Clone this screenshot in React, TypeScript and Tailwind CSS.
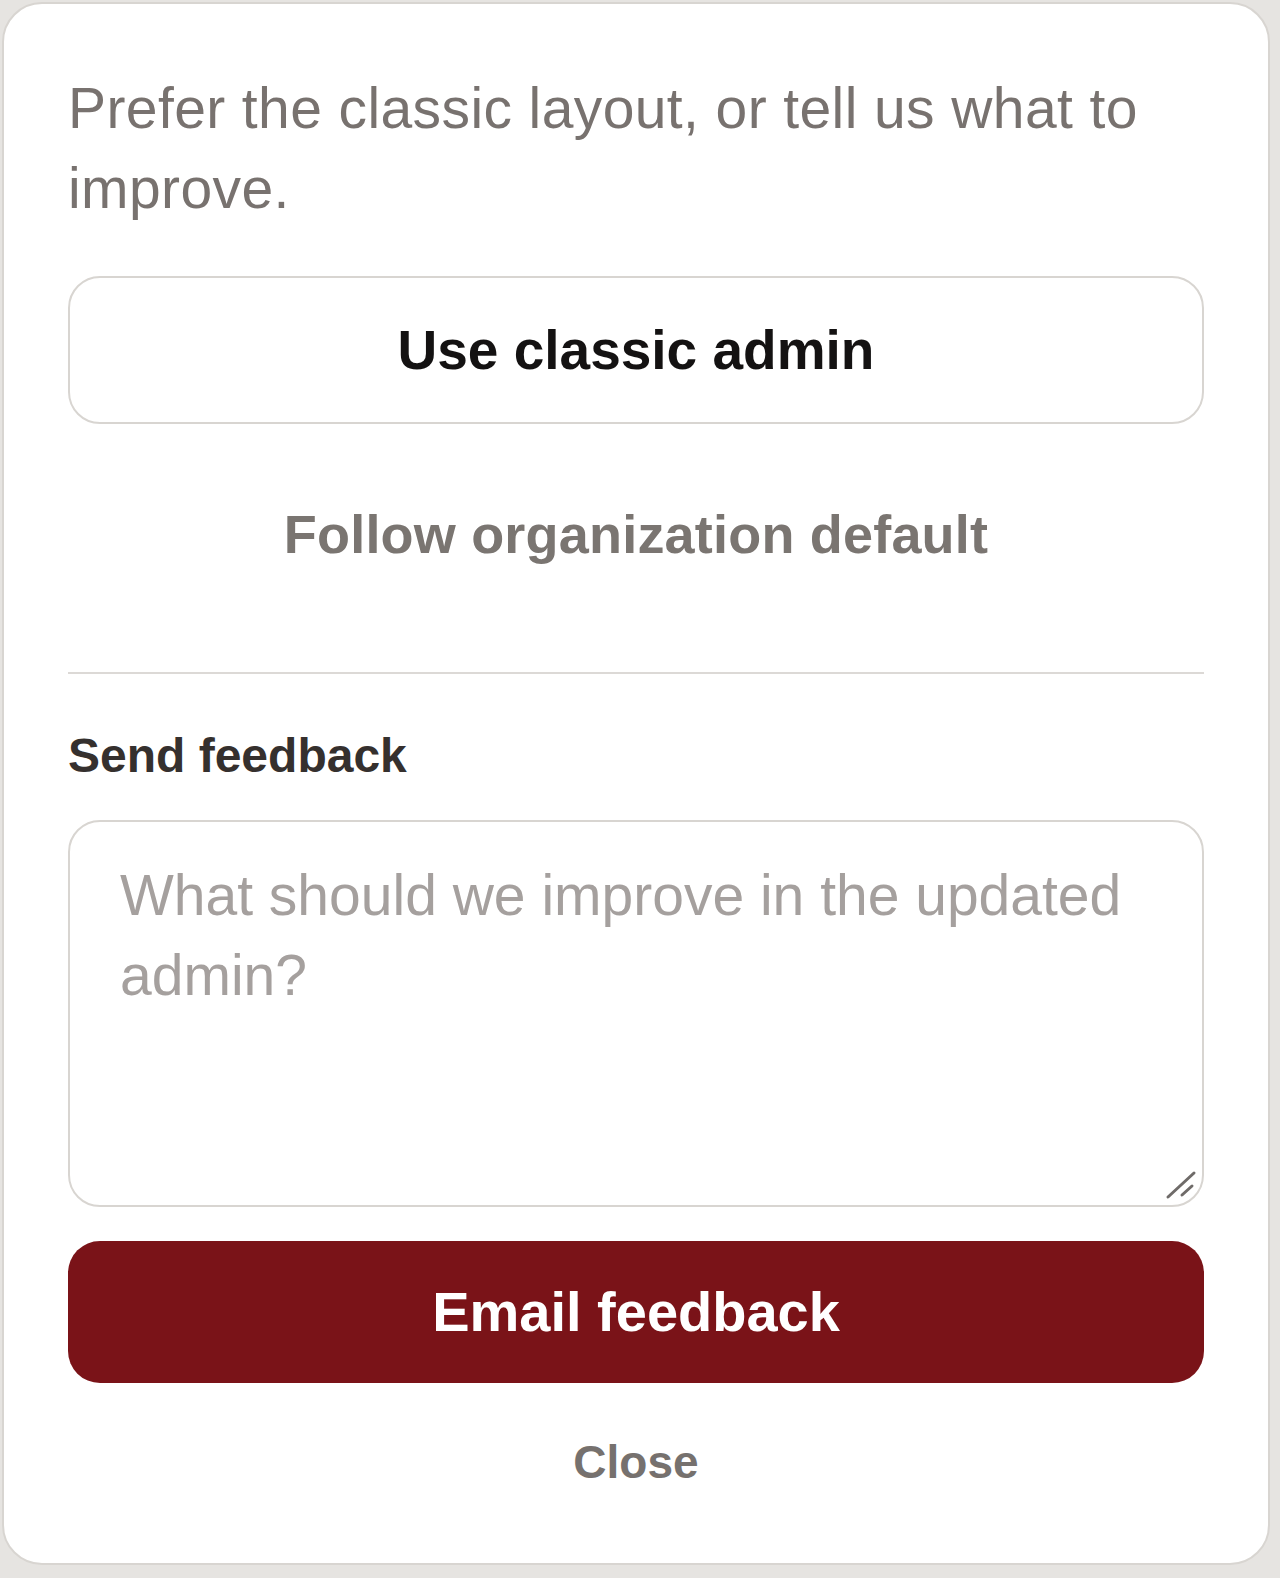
const App = () => {
  return (
    <div className="min-h-[1578px] w-[1280px] bg-[#e6e4e1] pt-[2px] pl-[2px] font-['Liberation_Sans',Arial,sans-serif]">
      <div className="w-[1268px] rounded-[40px] border-2 border-[#d8d5d1] bg-white px-[64px] pt-[64px] pb-[61px]">
        <p className="text-[57px] leading-[80px] tracking-[0.4px] text-[#78726f]">
          Prefer the classic layout, or tell us what to improve.
        </p>

        <button className="mt-[48px] flex h-[148px] w-full items-center justify-center rounded-[32px] border-2 border-[#d8d5d1] bg-white text-[55px] font-bold text-[#141212]">
          Use classic admin
        </button>

        <button className="mt-[36px] flex h-[148px] w-full items-center justify-center text-[54px] font-semibold tracking-[0.2px] text-[#7a7571]">
          Follow organization default
        </button>

        <div className="mt-[64px] h-[2px] bg-[#dcd9d6]"></div>

        <div className="mt-[52px] text-[48px] font-bold leading-[60px] text-[#35302e]">Send feedback</div>

        <div className="relative mt-[34px]">
          <textarea
            className="block h-[387px] w-full resize-none rounded-[32px] border-2 border-[#d8d5d1] bg-white px-[50px] pt-[33px] text-[57px] leading-[80px] text-[#35302e] outline-none placeholder:text-[#a5a09e]"
            placeholder="What should we improve in the updated admin?"
          ></textarea>
          <svg className="pointer-events-none absolute right-[6px] bottom-[6px]" width="34" height="34" viewBox="0 0 34 34">
            <line x1="4" y1="30" x2="30" y2="6" stroke="#6f6b69" strokeWidth="3" strokeLinecap="round" />
            <line x1="18" y1="28" x2="28" y2="19" stroke="#6f6b69" strokeWidth="3" strokeLinecap="round" />
          </svg>
        </div>

        <button className="mt-[34px] flex h-[142px] w-full items-center justify-center rounded-[32px] bg-[#7a1318] text-[56px] font-bold text-white">
          Email feedback
        </button>

        <button className="mt-[39px] flex h-[80px] w-full items-center justify-center text-[46px] font-semibold text-[#76716e]">
          Close
        </button>
      </div>
    </div>
  );
};

export default App;
